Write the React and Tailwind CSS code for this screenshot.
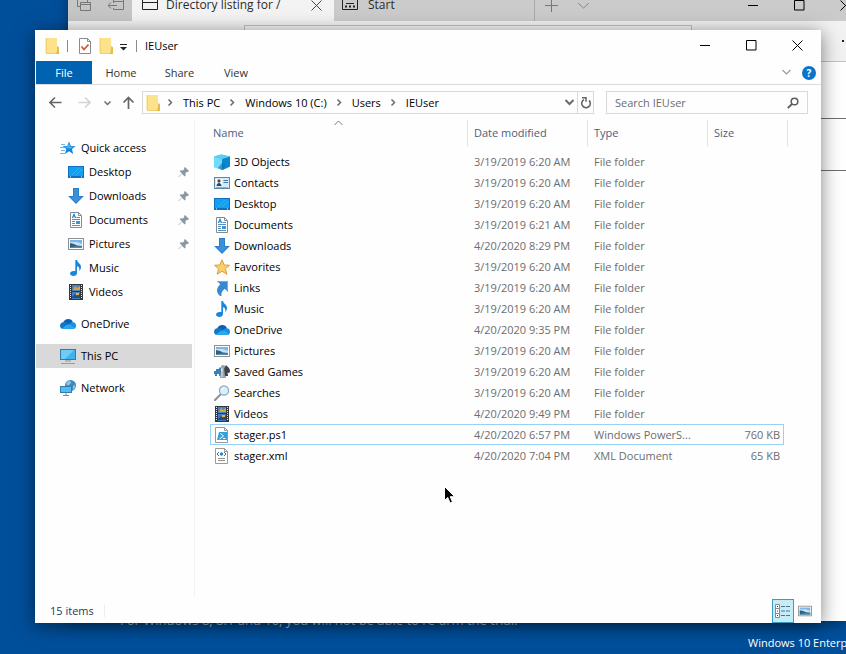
import { useState } from 'react';

/* ---------- Icons ---------- */

const Svg = ({ children, size = 16, className = '' }) => (
    <svg width={size} height={size} viewBox={`0 0 ${size} ${size}`} className={`flex-shrink-0 ${className}`} aria-hidden="true">
        {children}
    </svg>
);

const FolderIcon = () => (
    <Svg>
        <path d="M1 0h11v8l2 1v7H1z" fill="#f0d06c" />
        <path d="M2 0h10v11l-1 4H2z" fill="#fde28c" />
        <path d="M12 8.500l2 1V16h-3.500l1.500-2z" fill="#e5bd4c" />
        <path d="M1 0v15" stroke="#f7d775" />
    </Svg>
);

const PropertiesIcon = () => (
    <Svg>
        <path d="M2.500.500h8l3 3v12h-11z" fill="#fff" stroke="#8a8a8a" />
        <path d="M10.500.500v3h3" fill="none" stroke="#8a8a8a" />
        <path d="M4.500 8.500l2.500 3 4.500-5" fill="none" stroke="#d4572a" strokeWidth="1.800" />
    </Svg>
);

const QuickAccessIcon = () => (
    <Svg>
        <path d="M9 1.500l1.900 4.400 4.700.3-3.700 2.900 1.300 4.900L9 11.200 5 14l1.300-4.900L2.600 6.200l4.600-.3z" fill="#1583d8" />
        <path d="M9 3l1.200 3.600 3 .2-2.500 2-3.500-.6-3-1.200 3.200-.4z" fill="#46b3f5" />
        <path d="M1 4.500h4M0 7.500h4M1 10.500h4M0 13.500h5" stroke="#63bdf3" />
    </Svg>
);

const DesktopIcon = () => (
    <Svg>
        <rect x="0" y="2" width="16" height="12" fill="#0f6fc2" />
        <rect x="1" y="3" width="14" height="9" fill="#12a0f2" />
        <path d="M4 11l7-7M8 11l6-6" stroke="#2fb0f6" />
        <path d="M2 13h1M13 13h1" stroke="#fff" />
    </Svg>
);

const DownloadsIcon = () => (
    <Svg>
        <path d="M5 0h6v8h5l-8 8-8-8h5z" fill="#3a91db" />
        <path d="M5.500.500h5v8h4L8 15 1.500 8.500h4z" fill="none" stroke="#2c7dc6" />
    </Svg>
);

const DocumentsIcon = () => (
    <Svg>
        <path d="M2.500.500h8l3 3v12h-11z" fill="#fff" stroke="#858b91" />
        <path d="M10.500.500v3h3" fill="none" stroke="#858b91" />
        <path d="M8.500 5.500H12M4 7.500h8M4 9.500h3M4 11.500h3M4 13.500h8" stroke="#5b8fb8" />
        <path d="M4.500 6l1.500-3.500L7.500 6" fill="none" stroke="#1f86cf" strokeWidth="1.300" />
        <rect x="8" y="9" width="4" height="3" fill="#3f96d3" />
    </Svg>
);

const PicturesIcon = ({ size = 16 }) => (
    <svg width={size} height={size} viewBox="0 0 16 16" className="flex-shrink-0" aria-hidden="true">
        <rect x=".5" y="2.500" width="15" height="11" fill="#fff" stroke="#8b9197" />
        <rect x="2" y="4" width="12" height="8" fill="#78b5ea" />
        <path d="M2 6h7l5 2v2H2z" fill="#c9e0ee" />
        <path d="M2 7l4 1 3 1.500 5 .5v2H2z" fill="#315f80" />
        <path d="M7 10.500h7V12H2v-.7z" fill="#5b8ba6" />
    </svg>
);

const MusicIcon = () => (
    <Svg>
        <path d="M7 0h2c.3 2.500 4 3.500 4 7 0 1.800-.8 3-1.800 4 .6-2.500-.2-4.200-2.200-4.700V13c0 2-1.600 3-3.500 3S2 15 2 13.500 3.800 11 5.500 11H7z" fill="#1687dd" />
        <path d="M7 0h1v11H7z" fill="#4db4f2" />
    </Svg>
);

const VideosIcon = () => (
    <Svg>
        <rect x="1" y="0" width="14" height="16" fill="#34383c" />
        <path d="M2.500 1v14M13.500 1v14" stroke="#e7e7e7" strokeDasharray="1 1" />
        <rect x="4" y="1" width="8" height="6" fill="#4e83b3" />
        <path d="M5 6l2-4 2 2 3-2v4z" fill="#d8a33a" />
        <rect x="4" y="8" width="8" height="7" fill="#3f7fc4" />
        <path d="M4 13l3-3 2 2 3-3v5H4z" fill="#294b77" />
        <path d="M8 9h3v2H8z" fill="#e2b04a" />
    </Svg>
);

const OneDriveIcon = () => (
    <Svg>
        <path d="M3 7c.8-2.700 3-4 5.200-4 2.300 0 4 1.200 4.700 3.200L9 10z" fill="#0562b4" />
        <path d="M3.200 6.200C5.500 5.800 7 6.500 9 8l-7 5C.8 12.300 0 11.200 0 9.800c0-2 1.500-3.500 3.200-3.600z" fill="#1277c9" />
        <path d="M9 8c1.400-1.300 2.600-1.900 4-1.800 1.800.2 3 1.600 3 3.500 0 1.300-.6 2.400-1.500 3z" fill="#198fe0" />
        <path d="M2 12.700L9 8l6 4.500c-.5.3-1.200.5-2 .5H4c-.8 0-1.500 0-2-.3z" fill="#28a8ea" />
    </Svg>
);

const ThisPcIcon = () => (
    <Svg>
        <rect x=".5" y="1.500" width="15" height="10" fill="#40b2f0" stroke="#347aa8" />
        <path d="M1 2h13L5 11H1z" fill="#6ecaf7" />
        <path d="M5 13h6" stroke="#87949d" />
        <path d="M1 15.500h14" stroke="#8aa0b0" />
    </Svg>
);

const NetworkIcon = () => (
    <Svg>
        <circle cx="10.500" cy="5.500" r="5.500" fill="#4089bd" />
        <path d="M7 2c2-1.500 3.500-1 4 0s-1 2-2 3-2 0-3-1zM13 6l2-1v3l-2 2z" fill="#8cc4e4" />
        <rect x=".5" y="6.500" width="11" height="6" fill="#52bdf2" stroke="#357eab" />
        <path d="M6 13v2M3 15.500h6" stroke="#768894" />
    </Svg>
);

const ObjectsIcon = () => (
    <Svg>
        <path d="M0 2.500L7 .500 16 2.500v10L9 16 0 13z" fill="#27b4e8" />
        <path d="M0 2.500L8 5v11l-8-3z" fill="#71dcf8" />
        <path d="M8 5l8-2.500v10L8 16z" fill="#0c87cf" />
        <path d="M0 2.500L8 .500l8 2L8 5z" fill="#5fcdf2" />
        <path d="M8 9l4 2-4 5-4-2z" fill="#096cae" opacity=".6" />
    </Svg>
);

const ContactsIcon = () => (
    <Svg>
        <rect x=".5" y="2.500" width="15" height="11" fill="#d5ebf7" stroke="#5e87a8" />
        <rect x="2" y="4" width="6" height="7" fill="#fff" />
        <circle cx="5" cy="6" r="1.700" fill="#6c4a37" />
        <path d="M2.500 11c0-4 5-4 5 0z" fill="#274a6a" />
        <path d="M9.500 5.500H14M9.500 7.500H14" stroke="#427cae" />
        <path d="M2 12.500h12" stroke="#77b8dc" />
    </Svg>
);

const FavoritesIcon = () => (
    <Svg>
        <path d="M8 .800l2.200 5.200 5.300.3-4.100 3.500 1.500 5.400L8 12.300l-4.900 2.900 1.500-5.400L.500 6.300 5.800 6z" fill="#f8cf68" stroke="#dc9b3c" />
    </Svg>
);

const LinksIcon = () => (
    <Svg>
        <path d="M3 1h11v11l-3.300-3.200C8 11 7 13 7.500 16H6C2 12.500 2 8.500 6.300 4.300z" fill="#3889d0" />
        <path d="M4.500 1.500h9v9" fill="none" stroke="#69b2e8" />
    </Svg>
);

const GamesIcon = () => (
    <Svg>
        <path d="M2 5h3V3.500h2V12H5v-2H3v2H1v-2H0V7h2z" fill="#3c7fb9" />
        <path d="M9 1c1.700 0 2.500 1.200 2 3l-1 2c1 3 2 6 2 8H6c0-3 1-6 2-8L7 4c-.5-2 .5-3 2-3z" fill="#9ba3ab" />
        <path d="M12 1c2 2 4 3.500 4 6 0 2-1.500 2.500-2.500 1.500L14 12h-3l-1-7z" fill="#3d4248" />
        <path d="M8 4v9" stroke="#dfe4e8" />
    </Svg>
);

const SearchesIcon = () => (
    <Svg>
        <path d="M1 15l6-6" stroke="#8c9196" strokeWidth="2" strokeLinecap="round" />
        <circle cx="10" cy="5.500" r="4.600" fill="#d6f0fb" stroke="#8ba9bb" strokeWidth="1.200" />
        <path d="M7.500 5c.3-1.300 1.200-2 2.500-2" fill="none" stroke="#fff" />
    </Svg>
);

const ScriptIcon = () => (
    <Svg>
        <path d="M1.500.500h9l3 3v12h-12z" fill="#fff" stroke="#9a9a9a" />
        <path d="M10.500.500v3h3" fill="none" stroke="#9a9a9a" />
        <path d="M5 5h8.500L13 13H3z" fill="#35a0da" />
        <path d="M6.500 6.500l3 2.500-4 3M9 11.500h2.500" fill="none" stroke="#fff" />
    </Svg>
);

const XmlIcon = () => (
    <Svg>
        <path d="M1.500.500h9l3 3v12h-12z" fill="#fff" stroke="#9a9a9a" />
        <path d="M10.500.500v3h3" fill="none" stroke="#9a9a9a" />
        <path d="M5 4L3 6l2 2M10 4l2 2-2 2" fill="none" stroke="#4b6b8b" />
        <circle cx="7.500" cy="6" r="1.700" fill="#2f83c8" />
        <path d="M4 10.500h7M4 12.500h7" stroke="#909090" />
    </Svg>
);

const PinIcon = () => (
    <Svg size={12}>
        <path d="M7 1l4 4-1 1-1-.3-1.600 1.600.3 2.200-1 .9L4 7.700.8 11H.5v-.4L3.900 7.500 1.600 5l1-.8 2.200.3L6.400 3 6 2z" fill="#8d979f" />
    </Svg>
);

const Chevron = ({ d = 'M1.500 3l4 4 4-4', color = '#6b6b6b', width = 1.5, size = 11 }) => (
    <Svg size={size}>
        <path d={d} fill="none" stroke={color} strokeWidth={width} />
    </Svg>
);

const MinimizeIcon = () => (
    <Svg size={11}><path d="M0 5.500h10" stroke="#000" /></Svg>
);

const MaximizeIcon = () => (
    <Svg size={11}><path d="M.5.500h9.500v9.500H.5z" fill="none" stroke="#000" /></Svg>
);

const CloseIcon = ({ color = '#000' }) => (
    <Svg size={11}><path d="M.5.500l10 10M10.500.500l-10 10" stroke={color} /></Svg>
);

/* ---------- Data ---------- */

const quickAccess = [
    { label: 'Desktop', icon: DesktopIcon, pinned: true },
    { label: 'Downloads', icon: DownloadsIcon, pinned: true },
    { label: 'Documents', icon: DocumentsIcon, pinned: true },
    { label: 'Pictures', icon: PicturesIcon, pinned: true },
    { label: 'Music', icon: MusicIcon },
    { label: 'Videos', icon: VideosIcon },
];

const places = [
    { label: 'OneDrive', icon: OneDriveIcon },
    { label: 'This PC', icon: ThisPcIcon },
    { label: 'Network', icon: NetworkIcon },
];

const files = [
    { name: '3D Objects', icon: ObjectsIcon, date: '3/19/2019 6:20 AM', type: 'File folder' },
    { name: 'Contacts', icon: ContactsIcon, date: '3/19/2019 6:20 AM', type: 'File folder' },
    { name: 'Desktop', icon: DesktopIcon, date: '3/19/2019 6:20 AM', type: 'File folder' },
    { name: 'Documents', icon: DocumentsIcon, date: '3/19/2019 6:21 AM', type: 'File folder' },
    { name: 'Downloads', icon: DownloadsIcon, date: '4/20/2020 8:29 PM', type: 'File folder' },
    { name: 'Favorites', icon: FavoritesIcon, date: '3/19/2019 6:20 AM', type: 'File folder' },
    { name: 'Links', icon: LinksIcon, date: '3/19/2019 6:20 AM', type: 'File folder' },
    { name: 'Music', icon: MusicIcon, date: '3/19/2019 6:20 AM', type: 'File folder' },
    { name: 'OneDrive', icon: OneDriveIcon, date: '4/20/2020 9:35 PM', type: 'File folder' },
    { name: 'Pictures', icon: PicturesIcon, date: '3/19/2019 6:20 AM', type: 'File folder' },
    { name: 'Saved Games', icon: GamesIcon, date: '3/19/2019 6:20 AM', type: 'File folder' },
    { name: 'Searches', icon: SearchesIcon, date: '3/19/2019 6:20 AM', type: 'File folder' },
    { name: 'Videos', icon: VideosIcon, date: '4/20/2020 9:49 PM', type: 'File folder' },
    { name: 'stager.ps1', icon: ScriptIcon, date: '4/20/2020 6:57 PM', type: 'Windows PowerS...', size: '760 KB' },
    { name: 'stager.xml', icon: XmlIcon, date: '4/20/2020 7:04 PM', type: 'XML Document', size: '65 KB' },
];

/* ---------- Browser window behind the explorer ---------- */

const BrowserWindow = () => (
    <div className="absolute -top-[11px] bottom-[33px] left-[68px] right-0 overflow-hidden bg-white shadow-[0_2px_12px_rgba(0,0,0,0.4)]">
        <div className="flex h-8 items-stretch bg-[#cbcbcb] text-[12px] text-[#2b2b2b]">
            <div className="flex w-16 items-center gap-4 bg-[#c6c6c6] pl-2">
                <button aria-label="Show set aside tabs">
                    <Svg className="text-[#777777]">
                        <path d="M4.500 9.500h-3v-7h10v3" fill="none" stroke="currentColor" />
                        <path d="M4.500 5.500h10v8h-10zM4.500 7.500h10" fill="none" stroke="currentColor" />
                    </Svg>
                </button>
                <button aria-label="Set tabs aside">
                    <Svg className="text-[#777777]">
                        <path d="M5.500 6V2.500h10v10h-10V11M5.500 4.500h10M0 8.500h9M3 5.500l-3 3 3 3" fill="none" stroke="currentColor" />
                    </Svg>
                </button>
            </div>
            <div className="flex w-[202px] items-center bg-[#f3f3f3] pl-2.5 pr-3">
                <Svg>
                    <path d="M.5 2.500h15v10H.5zM.5 5.500h15" fill="none" stroke="#222" />
                </Svg>
                <span className="ml-2 flex-1 whitespace-nowrap">Directory listing for /</span>
                <button aria-label="Close tab"><CloseIcon color="#444" /></button>
            </div>
            <div className="flex w-[201px] items-center border-r border-[#aaaaaa] pl-2">
                <Svg>
                    <path d="M.5 1.500h15v11H.5zM4 6.500h8" fill="none" stroke="#222" />
                    <path d="M3 9.500h2M7 9.500h2M11 9.500h2" stroke="#222" strokeWidth="2" />
                </Svg>
                <span className="ml-2.5">Start</span>
            </div>
            <div className="flex flex-1 items-center gap-5 pl-2.5">
                <button aria-label="New tab">
                    <Svg size={13}><path d="M6.500 0v13M0 6.500h13" stroke="#777" /></Svg>
                </button>
                <button aria-label="Tab list"><Chevron d="M0 3l5.500 5L11 3" color="#888" width={1} /></button>
            </div>
            <div className="-mr-[22px] flex items-center">
                <button aria-label="Minimize browser" className="flex w-[46px] justify-center"><MinimizeIcon /></button>
                <button aria-label="Maximize browser" className="flex w-[46px] justify-center"><MaximizeIcon /></button>
                <button aria-label="Close browser" className="flex w-[46px] justify-center"><CloseIcon /></button>
            </div>
        </div>
        <div className="flex h-[41px] items-center border-b border-[#c4c4c4] bg-[#f2f2f2] pl-44">
            <div className="h-8 flex-1 border border-[#c2c2c2] bg-[#f7f7f7]" />
            <button aria-label="More actions" className="-mr-2.5 flex w-[164px] justify-end">
                <Svg>
                    <path d="M2 8h2M7 8h2M12 8h2" stroke="#222" strokeWidth="2" />
                </Svg>
            </button>
        </div>
        <div className="mt-14 h-[53px] border-y border-[#6e6e6e]" />
    </div>
);

/* ---------- Explorer ---------- */

const TitleBar = () => (
    <div className="flex h-[31px] items-center pl-2.5">
        <FolderIcon />
        <span className="mx-1.5 h-3 w-px bg-[#8a8a8a]" />
        <div className="flex items-center gap-1.5 pl-0.5">
            <button aria-label="Properties" className="pl-px"><PropertiesIcon /></button>
            <button aria-label="New folder"><FolderIcon /></button>
        </div>
        <button aria-label="Customize toolbar" className="ml-1 pt-1">
            <Svg size={9}><path d="M1 1.500h7" stroke="#222" /><path d="M1 4h7L4.500 7.500z" fill="#222" /></Svg>
        </button>
        <span className="mx-2 h-3 w-px bg-[#8a8a8a]" />
        <h1 className="flex-1 text-black">IEUser</h1>
        <div className="flex items-center pr-px">
            <button aria-label="Minimize" className="flex w-[46px] justify-center"><MinimizeIcon /></button>
            <button aria-label="Maximize" className="flex w-[46px] justify-center"><MaximizeIcon /></button>
            <button aria-label="Close" className="flex w-[46px] justify-center"><CloseIcon /></button>
        </div>
    </div>
);

const Ribbon = () => (
    <div className="flex h-6 items-stretch border-b border-[#dadbdc] pl-px text-[#333333]">
        <button className="w-14 bg-[#0063b1] text-white">File</button>
        <button className="w-[58px]">Home</button>
        <button className="w-[59px]">Share</button>
        <button className="w-[54px]">View</button>
        <div className="ml-auto flex items-center gap-2.5 pr-[5px]">
            <button aria-label="Expand the ribbon"><Chevron color="#9a9a9a" width={1.2} /></button>
            <button aria-label="Help" className="h-3.5 w-3.5 rounded-full bg-[#0a74cc] text-[10px] font-bold leading-[14px] text-white">?</button>
        </div>
    </div>
);

const AddressBar = () => {
    const [query, setQuery] = useState('');
    const crumbs = ['This PC', 'Windows 10 (C:)', 'Users', 'IEUser'];

    return (
        <div className="flex h-[35px] items-center pl-3.5 pr-[13px]">
            <button aria-label="Back">
                <Svg size={13}><path d="M12.500 6.500H1.500M6 1.500l-5 5 5 5" fill="none" stroke="#666" strokeWidth="1.600" /></Svg>
            </button>
            <button aria-label="Forward" className="ml-4">
                <Svg size={13}><path d="M.5 6.500h11M7 1.500l5 5-5 5" fill="none" stroke="#d4d4d4" strokeWidth="1.600" /></Svg>
            </button>
            <button aria-label="Recent locations" className="ml-3"><Chevron d="M1.500 3.500l3 3 3-3" size={9} /></button>
            <button aria-label="Up" className="ml-2.5">
                <Svg size={13}><path d="M6.500 13V1.500M1.500 6.500l5-5 5 5" fill="none" stroke="#666" strokeWidth="1.700" /></Svg>
            </button>
            <div className="ml-[7px] flex h-[23px] min-w-0 flex-1 items-center border border-[#d9d9d9] pl-[3px]">
                <FolderIcon />
                <div className="-ml-1 flex items-center">
                    {crumbs.map((crumb) => (
                        <span key={crumb} className="flex items-center">
                            <span className="mx-[7px] flex"><Chevron d="M3.500 2.500l3 3-3 3" /></span>
                            <button className="whitespace-nowrap text-black">{crumb}</button>
                        </span>
                    ))}
                </div>
                <button aria-label="Previous locations" className="ml-auto mr-0.5"><Chevron width={2} /></button>
                <button aria-label="Refresh" className="flex h-full w-4 items-center justify-center border-l border-[#d9d9d9]">
                    <Svg size={12}>
                        <path d="M9 3.300A4.300 4.300 0 1 1 4 2.600" fill="none" stroke="#666" strokeWidth="1.600" />
                        <path d="M2 .800h4v4" fill="none" stroke="#666" strokeWidth="1.500" />
                    </Svg>
                </button>
            </div>
            <div className="ml-3 flex h-[23px] w-[202px] items-center border border-[#d9d9d9] pl-2 pr-2">
                <input
                    aria-label="Search IEUser"
                    placeholder="Search IEUser"
                    value={query}
                    onChange={(e) => setQuery(e.target.value)}
                    className="min-w-0 flex-1 bg-transparent outline-none placeholder:text-[#6d6d6d]"
                />
                <Svg size={12}>
                    <circle cx="7.500" cy="4.500" r="3.300" fill="none" stroke="#5c5c5c" strokeWidth="1.500" />
                    <path d="M5 7L.800 11.200" stroke="#5c5c5c" strokeWidth="1.800" />
                </Svg>
            </div>
        </div>
    );
};

const Sidebar = ({ current, setCurrent }) => (
    <nav className="w-[160px] flex-shrink-0 border-r border-[#f3f3f3] pl-px pr-0.5 pt-4">
        <button className="flex h-6 w-full items-center gap-[5px] pl-6 text-left" onClick={() => setCurrent('Quick access')}>
            <QuickAccessIcon />
            Quick access
        </button>
        {quickAccess.map((item) => {
            const Icon = item.icon;
            return (
                <button
                    key={item.label}
                    onClick={() => setCurrent(item.label)}
                    className="flex h-6 w-full items-center gap-[5px] pl-8 pr-0.5 text-left"
                >
                    <Icon />
                    <span className="flex-1">{item.label}</span>
                    {item.pinned && <PinIcon />}
                </button>
            );
        })}
        {places.map((item) => {
            const Icon = item.icon;
            return (
                <button
                    key={item.label}
                    onClick={() => setCurrent(item.label)}
                    className={`mt-2 flex h-6 w-full items-center gap-[5px] pl-6 text-left ${current === item.label ? 'bg-[#d9d9d9]' : ''}`}
                >
                    <Icon />
                    {item.label}
                </button>
            );
        })}
    </nav>
);

const HeaderCell = ({ children, className = '', colSpan }) => (
    <th scope="col" colSpan={colSpan} className="h-[31px] p-0 text-left align-top font-normal">
        <div className={`relative flex h-[26px] items-center border-r border-[#e2e2e2] ${className}`}>{children}</div>
    </th>
);

const FileTable = ({ selected, setSelected }) => (
    <table className="w-[577px] table-fixed border-separate border-spacing-0">
        <colgroup>
            <col className="w-[258px]" />
            <col className="w-[120px]" />
            <col className="w-[120px]" />
            <col className="w-[76px]" />
            <col className="w-1" />
        </colgroup>
        <thead className="text-[#4c607a]">
            <tr>
                <HeaderCell className="pl-[3px]">
                    Name
                    <span className="absolute inset-x-0 top-0 flex justify-center">
                        <Svg size={9}><path d="M.5 5l4-4 4 4" fill="none" stroke="#777" /></Svg>
                    </span>
                </HeaderCell>
                <HeaderCell className="pl-1.5">Date modified</HeaderCell>
                <HeaderCell className="pl-1.5">Type</HeaderCell>
                <HeaderCell className="pl-1.5" colSpan={2}>Size</HeaderCell>
            </tr>
        </thead>
        <tbody className="text-[#6d6d6d]">
            {files.map((file) => {
                const Icon = file.icon;
                const line = selected === file.name ? 'border-[#99d1f5]' : 'border-transparent';
                return (
                    <tr key={file.name} onClick={() => setSelected(file.name)}>
                        <td className={`h-[21px] border-y border-l py-0 pl-[3px] pr-0 text-black ${line}`}>
                            <span className="flex items-center gap-1">
                                <Icon />
                                {file.name}
                            </span>
                        </td>
                        <td className={`h-[21px] border-y py-0 pl-1.5 pr-0 ${line}`}>{file.date}</td>
                        <td className={`h-[21px] border-y py-0 pl-1.5 pr-0 ${line}`}>{file.type}</td>
                        <td className={`h-[21px] border-y border-r py-0 pl-0 pr-[3px] text-right ${line}`}>{file.size}</td>
                    </tr>
                );
            })}
        </tbody>
    </table>
);

const StatusBar = () => (
    <div className="flex h-[26px] items-center pl-[15px] pr-[9px] pt-px text-[#1e395b]">
        <span>15 items</span>
        <span className="ml-2.5 h-3 w-px bg-[#ededed]" />
        <button aria-label="Details view" className="ml-auto flex h-6 w-[22px] items-center justify-center border border-[#3a9cc4] bg-[#c5ecf7]">
            <Svg>
                <path d="M.5 1.500h4v13h-4zM.5 5.500h4M.5 10.500h4" fill="#fff" stroke="#8a8a8a" />
                <path d="M2 3.500h1M2 8h1M2 12.500h1" stroke="#333" />
                <path d="M6 3.500h4M11 3.500h4M6 8h4M11 8h4M6 12.500h4M11 12.500h4" stroke="#52748a" />
            </Svg>
        </button>
        <button aria-label="Thumbnail view" className="ml-1"><PicturesIcon size={14} /></button>
    </div>
);

const App = () => {
    const [current, setCurrent] = useState('This PC');
    const [selected, setSelected] = useState('stager.ps1');

    return (
        <div className="relative flex min-h-screen flex-col overflow-hidden bg-[#004f9b] font-['Open_Sans','Noto_Sans',sans-serif] text-[11px] leading-4">
            {/* Desktop notice, mostly hidden by the explorer */}
            <p className="absolute bottom-[26px] left-[120px] whitespace-nowrap text-[13px] text-[#b9cde2]">
                For Windows 8, 8.1 and 10, you will not be able to re-arm the trial.
            </p>
            <BrowserWindow />

            <main className="relative ml-[35px] mr-[25px] mt-[30px] flex flex-1 flex-col bg-[#fefefe] shadow-[0_3px_18px_rgba(0,0,0,0.5)]">
                <TitleBar />
                <Ribbon />
                <AddressBar />
                <div className="flex flex-1">
                    <Sidebar current={current} setCurrent={setCurrent} />
                    <section className="min-w-0 flex-1 overflow-hidden pl-[15px]">
                        <FileTable selected={selected} setSelected={setSelected} />
                    </section>
                </div>
                <StatusBar />
            </main>

            <div className="relative flex h-[31px] items-center justify-end pt-2 text-[11px] text-white">
                <span className="w-[98px] whitespace-nowrap">Windows 10 Enterprise</span>
            </div>

            {/* Mouse pointer */}
            <svg width="13" height="19" viewBox="0 0 13 19" className="absolute left-[444px] top-[486px]" aria-hidden="true">
                <path d="M.5.500v14l3.300-3 2.200 5.500 2.500-1-2.300-5.300h4.500z" fill="#000" stroke="#fff" />
            </svg>
        </div>
    );
};

export default App;
